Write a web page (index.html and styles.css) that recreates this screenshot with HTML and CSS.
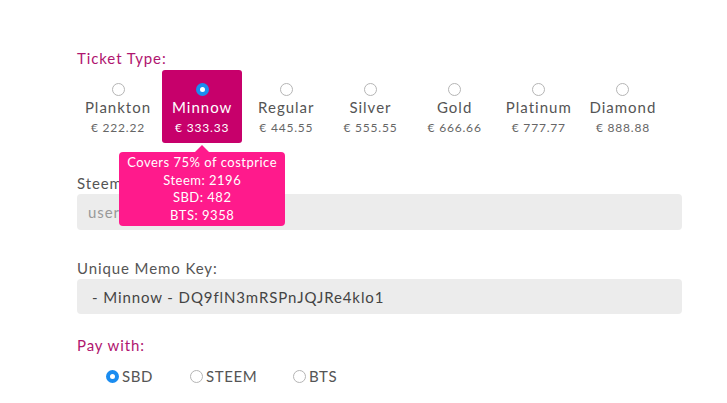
FILE: index.html
```html
<!DOCTYPE html>
<html>
<head>
<meta charset="utf-8">
<link rel="stylesheet" href="styles.css">
</head>
<body>
<div class="form">
  <div class="label pink">Ticket Type:</div>
  <div class="tickets">
    <div class="ticket"><span class="radio"></span><span class="name">Plankton</span><span class="price">€ 222.22</span></div>
    <div class="ticket active"><span class="radio checked"></span><span class="name">Minnow</span><span class="price">€ 333.33</span>
      <div class="tip">
        <div>Covers 75% of costprice</div>
        <div>Steem: 2196</div>
        <div>SBD: 482</div>
        <div>BTS: 9358</div>
      </div>
    </div>
    <div class="ticket"><span class="radio"></span><span class="name">Regular</span><span class="price">€ 445.55</span></div>
    <div class="ticket"><span class="radio"></span><span class="name">Silver</span><span class="price">€ 555.55</span></div>
    <div class="ticket"><span class="radio"></span><span class="name">Gold</span><span class="price">€ 666.66</span></div>
    <div class="ticket"><span class="radio"></span><span class="name">Platinum</span><span class="price">€ 777.77</span></div>
    <div class="ticket"><span class="radio"></span><span class="name">Diamond</span><span class="price">€ 888.88</span></div>
  </div>
  <div class="label user-label">Steem Username:</div>
  <div class="input placeholder">username</div>
  <div class="label memo-label">Unique Memo Key:</div>
  <div class="input value">- Minnow - DQ9flN3mRSPnJQJRe4klo1</div>
  <div class="label pink pay-label">Pay with:</div>
  <div class="pay">
    <span class="opt"><span class="radio checked"></span>SBD</span>
    <span class="opt"><span class="radio"></span>STEEM</span>
    <span class="opt"><span class="radio"></span>BTS</span>
  </div>
</div>
</body>
</html>
```
FILE: styles.css
```css
html, body { margin: 0; padding: 0; background: #fff; }
body { font-family: Lato, "Noto Sans", sans-serif; color: #444; }
.form { width: 605px; margin-left: 77px; padding-top: 49px; }
.label { font-size: 15px; line-height: 18px; color: #555; letter-spacing: 0.9px; }
.pink { color: #b0156f; }
.tickets { display: flex; gap: 4.17px; margin-left: 1px; margin-top: 3px; }
.ticket { position: relative; width: 80px; height: 73px; box-sizing: border-box; padding-top: 13px;
  display: flex; flex-direction: column; align-items: center; border-radius: 3px; }
.ticket .name { font-size: 15px; line-height: 18px; margin-top: 2px; color: #555; letter-spacing: 1px; white-space: nowrap; }
.ticket .price { font-size: 12px; line-height: 14px; margin-top: 5px; color: #666; letter-spacing: 0.8px; white-space: nowrap; }
.ticket.active { background: #c7006b; }
.ticket.active .name, .ticket.active .price { color: #fff; }
.radio { display: inline-block; width: 13px; height: 13px; box-sizing: border-box; border: 1px solid #b5b5b5;
  border-radius: 50%; background: #fff; flex: none; }
.radio.checked { border: 4px solid #1a8cf0; background: #fff; }
.tip { position: absolute; top: 82px; left: 50%; transform: translateX(-50%); width: 166px; box-sizing: border-box;
  padding: 2px 0; background: #ff1a8c; color: #fff; border-radius: 4px; font-size: 13px; line-height: 17.5px;
  letter-spacing: 0.5px; text-align: center; z-index: 2; white-space: nowrap; }
.tip::before { content: ""; position: absolute; top: -7px; left: 50%; margin-left: -7px; border-left: 7px solid transparent;
  border-right: 7px solid transparent; border-bottom: 7px solid #ff1a8c; }
.user-label { margin-top: 31px; }
.input { background: #ececec; border-radius: 4px; height: 36px; box-sizing: border-box; padding: 0 11px;
  display: flex; align-items: center; font-size: 15px; margin-top: 2px; letter-spacing: 0.9px; }
.placeholder { color: #999; }
.value { color: #444; padding-left: 15px; height: 35px; }
.memo-label { margin-top: 29px; }
.pay-label { margin-top: 22px; }
.pay { display: flex; margin-left: 29px; margin-top: 13px; font-size: 15px; line-height: 18px; color: #555; letter-spacing: 0.6px; }
.opt { display: inline-flex; align-items: center; gap: 3px; }
.opt:nth-child(1) { width: 84px; }
.opt:nth-child(2) { width: 103px; }
```
